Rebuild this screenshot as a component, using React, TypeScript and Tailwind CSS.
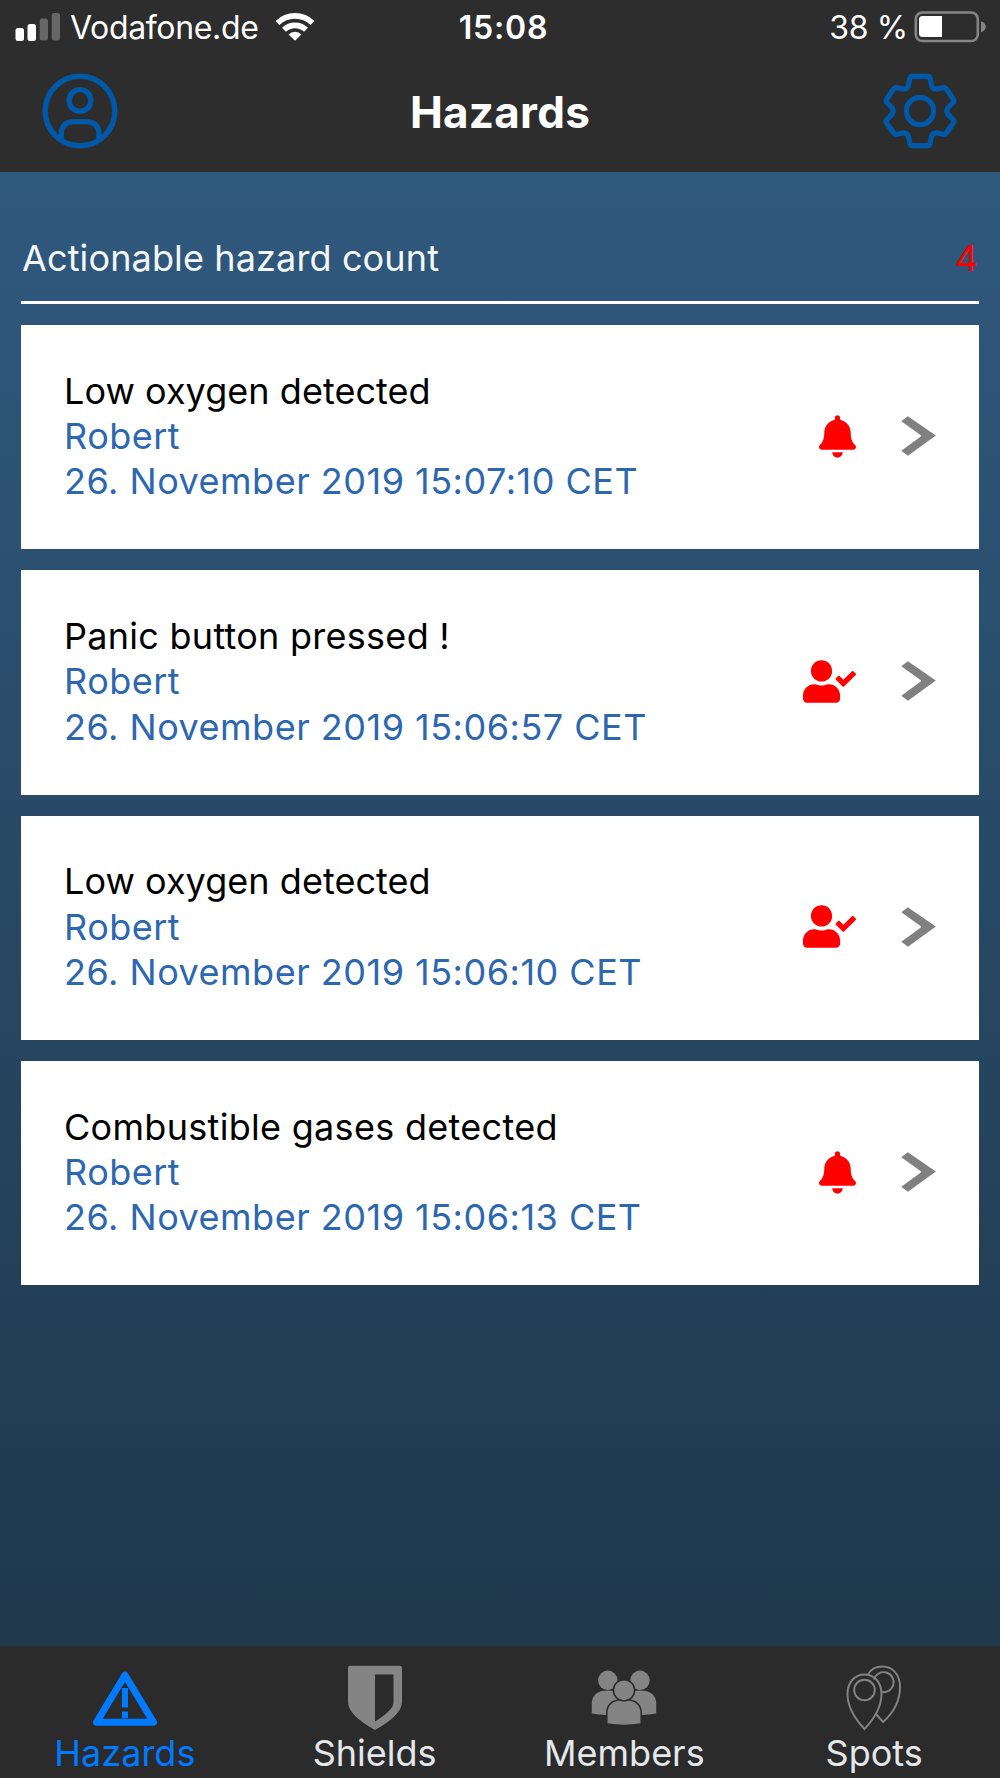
import { FaBell, FaUserCheck } from "react-icons/fa"

interface Hazard {
    title: string
    titleTracking: string
    member: string
    time: string
    acknowledged: boolean
}

const hazards: Hazard[] = [
    { title: "Low oxygen detected", titleTracking: "tracking-[0.05px]", member: "Robert", time: "26. November 2019 15:07:10 CET", acknowledged: false },
    { title: "Panic button pressed !", titleTracking: "tracking-[0.27px]", member: "Robert", time: "26. November 2019 15:06:57 CET", acknowledged: true },
    { title: "Low oxygen detected", titleTracking: "tracking-[0.05px]", member: "Robert", time: "26. November 2019 15:06:10 CET", acknowledged: true },
    { title: "Combustible gases detected", titleTracking: "tracking-[0.3px]", member: "Robert", time: "26. November 2019 15:06:13 CET", acknowledged: false },
]

function SignalIcon() {
    return (
        <svg className="w-[46px] h-[30px]" viewBox="0 0 46 30">
            <rect x="0.5" y="16" width="8.5" height="13" rx="2.5" fill="#fff" />
            <rect x="12.5" y="12" width="8.5" height="17" rx="2.5" fill="#fff" />
            <rect x="24.7" y="6.5" width="8.3" height="22" rx="2.5" fill="#666" />
            <rect x="36.7" y="1" width="8.3" height="27.5" rx="2.5" fill="#666" />
        </svg>
    )
}

function WifiIcon() {
    return (
        <svg className="w-[40px] h-[30px]" viewBox="0 0 40 30" fill="none" stroke="#fff" strokeWidth="5.6">
            <path d="M2.5 11A25 25 0 0 1 37.5 11" />
            <path d="M9 17.8A15.8 15.8 0 0 1 31 17.8" />
            <path d="M20 28.8L13.6 22.4A9.2 9.2 0 0 1 26.4 22.4Z" fill="#fff" stroke="none" />
        </svg>
    )
}

function BatteryIcon() {
    return (
        <svg className="w-[72px] h-[32px]" viewBox="0 0 72 32">
            <rect x="1.8" y="1.5" width="62" height="28.5" rx="6.5" fill="none" stroke="#858585" strokeWidth="2.6" />
            <path d="M5 8.5Q5 5 8.5 5H28V26H8.5Q5 26 5 22.5Z" fill="#fff" />
            <path d="M67 10.2Q71.8 12 71.8 15.7T67 21.2Z" fill="#858585" />
        </svg>
    )
}

function ProfileIcon() {
    return (
        <svg className="w-[76px] h-[76px]" viewBox="0 0 76 76" fill="none" stroke="#0059a8" strokeWidth="5.4">
            <circle cx="38" cy="38" r="34.8" />
            <circle cx="38" cy="27.4" r="10.8" />
            <path d="M19.2 67V62Q19.2 48.6 32.5 48.6H43.5Q57 48.6 57 62V67" />
        </svg>
    )
}

function GearIcon() {
    return (
        <svg className="w-[76px] h-[76px]" viewBox="0 0 76 76" fill="none" stroke="#0059a8" strokeWidth="5.2" strokeLinejoin="round">
            <path d="M30 3.4H46Q47.5 3.4 48 5L49.4 12Q50.3 16.2 54.3 16.2L61.5 14.6Q63.5 14.3 64.5 16L71.6 26.5Q72.4 28 71.1 29.5L66 34.6Q63.4 38 66 41.4L71.1 46.5Q72.4 48 71.6 49.5L64.5 60Q63.5 61.7 61.5 61.4L54.3 59.8Q50.3 59.8 49.4 64L48 71Q47.5 72.6 46 72.6H30Q28.5 72.6 28 71L26.6 64Q25.7 59.8 21.7 59.8L14.5 61.4Q12.5 61.7 11.5 60L4.4 49.5Q3.6 48 4.9 46.5L10 41.4Q12.6 38 10 34.6L4.9 29.5Q3.6 28 4.4 26.5L11.5 16Q12.5 14.3 14.5 14.6L21.7 16.2Q25.7 16.2 26.6 12L28 5Q28.5 3.4 30 3.4Z" />
            <circle cx="38" cy="38" r="13.6" />
        </svg>
    )
}

function ChevronIcon() {
    return (
        <svg className="w-[35px] h-[40px]" viewBox="0 0 35 40">
            <path d="M0.3 5.2L6.8 0.2L34.8 19.6L7 39.8L0.3 34.8L19.8 20.5V19.3Z" fill="#808080" />
        </svg>
    )
}

function HazardIcon() {
    return (
        <svg className="w-[66px] h-[66px]" viewBox="0 0 66 66" fill="none" stroke="#007aff">
            <path d="M33 10.2L61.5 57.3H4.5Z" strokeWidth="7" strokeLinejoin="round" />
            <path d="M33 23V42.5M33 46.5V53" strokeWidth="6" />
        </svg>
    )
}

function ShieldIcon() {
    return (
        <svg className="w-[66px] h-[66px]" viewBox="0 0 66 66">
            <path fillRule="evenodd" d="M8 0.7H58Q60 0.7 60 2.7V37Q60 50 33 65Q6 50 6 37V2.7Q6 0.7 8 0.7ZM33 9.5V56.5Q51.5 45 51.5 37.5V9.5Z" fill="#848484" />
        </svg>
    )
}

function MembersIcon() {
    return (
        <svg className="w-[66px] h-[66px]" viewBox="0 0 66 66" fill="#848484">
            <circle cx="16.8" cy="15.3" r="9.7" />
            <circle cx="49" cy="15.3" r="9.7" />
            <path d="M0.8 48.5V39Q0.8 25.5 16.8 25.5T33 39V48Q16 51.5 0.8 48.5Z" />
            <path d="M65.2 48.5V39Q65.2 25.5 49 25.5T33 39V48Q50 51.5 65.2 48.5Z" />
            <g stroke="#2b2b2b" strokeWidth="1.5">
                <path d="M15.8 59V48Q16 34.5 33 34.5T50.2 48V59Q33 62 15.8 59Z" />
                <circle cx="33" cy="25.3" r="10.6" />
            </g>
        </svg>
    )
}

function SpotsIcon() {
    return (
        <svg className="w-[66px] h-[66px]" viewBox="0 0 66 66" fill="none" stroke="#848484" strokeWidth="1.9">
            <path d="M27 9.5Q31 1.5 41.5 1.5C52 1.5 59 10 59 22Q59 42 42 57L35 49" />
            <path d="M33 14.5A10 10 0 1 1 40 26.8" />
            <path d="M23.5 9.5C33 9.5 40.5 17 40.5 29Q40.5 46 23.5 64Q6.5 46 6.5 29C6.5 17 14 9.5 23.5 9.5Z" />
            <circle cx="23.5" cy="25" r="10.3" />
        </svg>
    )
}

const tabs = [
    { label: "Hazards", icon: <HazardIcon />, active: true },
    { label: "Shields", icon: <ShieldIcon />, active: false },
    { label: "Members", icon: <MembersIcon />, active: false },
    { label: "Spots", icon: <SpotsIcon />, active: false },
]

function HazardCard({ hazard }: { hazard: Hazard }) {
    return (
        <li className="h-[224.3px] bg-white flex items-center justify-between pl-[43px] pr-[43px] text-[36px] leading-[45.3px]">
            <div className="pb-px whitespace-nowrap">
                <h2 className={"text-black " + hazard.titleTracking}>{hazard.title}</h2>
                <p className="text-[#2c67b0] tracking-[0.5px]">{hazard.member}</p>
                <p className="text-[#2c67b0] tracking-[0.5px]">{hazard.time}</p>
            </div>
            <div className="flex items-center gap-[45px] pb-[2px] text-[#ff0000]">
                {hazard.acknowledged ? <FaUserCheck className="w-[53px] h-[43px]" /> : <FaBell className="w-[37px] h-[43px]" />}
                <ChevronIcon />
            </div>
        </li>
    )
}

export default function App() {
    return (
        <div className="w-[1000px] h-[1778px] flex flex-col overflow-hidden bg-[#2d2d2d] font-[Inter,sans-serif]">
            <header className="h-[172px] shrink-0 text-white">
                <div className="h-[54px] grid grid-cols-[1fr_auto_1fr] items-center pl-[15px] pr-[14px] text-[32px] whitespace-nowrap">
                    <div className="flex items-center">
                        <SignalIcon />
                        <span className="ml-[9px] pt-[2px] tracking-[-0.35px]">Vodafone.de</span>
                        <span className="ml-[17px]"><WifiIcon /></span>
                    </div>
                    <span className="pt-[2px] pl-[6px] font-semibold tracking-[0.8px]">15:08</span>
                    <div className="flex items-center justify-end gap-[6px]">
                        <span className="pt-[2px] tracking-[-0.3px]">38 %</span>
                        <BatteryIcon />
                    </div>
                </div>
                <div className="h-[114px] flex items-center justify-between px-[42px]">
                    <ProfileIcon />
                    <h1 className="pt-[2px] text-[44px] font-bold tracking-[0.25px]">Hazards</h1>
                    <GearIcon />
                </div>
            </header>

            <main className="flex-1 px-[21px] bg-linear-to-b from-[#30597e] to-[#1f384c]">
                <div className="h-[132px] pt-[42px] border-b-[3px] border-white flex justify-between text-[36px] leading-[88px]">
                    <span className="ml-px text-[#f4f7fa] tracking-[0.13px]">Actionable hazard count</span>
                    <span className="mr-px text-[#ff0000]">4</span>
                </div>
                <ul className="mt-[21px] flex flex-col gap-[21px]">
                    {hazards.map((hazard) => (
                        <HazardCard key={hazard.time} hazard={hazard} />
                    ))}
                </ul>
            </main>

            <nav className="h-[132px] shrink-0 grid grid-cols-4 pr-px bg-[#2b2b2b] text-[36px]">
                {tabs.map((tab) => (
                    <button key={tab.label} className={tab.active ? "flex flex-col items-center pt-[19px] text-[#007aff]" : "flex flex-col items-center pt-[19px] text-[#e4e8eb]"}>
                        {tab.icon}
                        <span className="leading-[44px]">{tab.label}</span>
                    </button>
                ))}
            </nav>
        </div>
    )
}
